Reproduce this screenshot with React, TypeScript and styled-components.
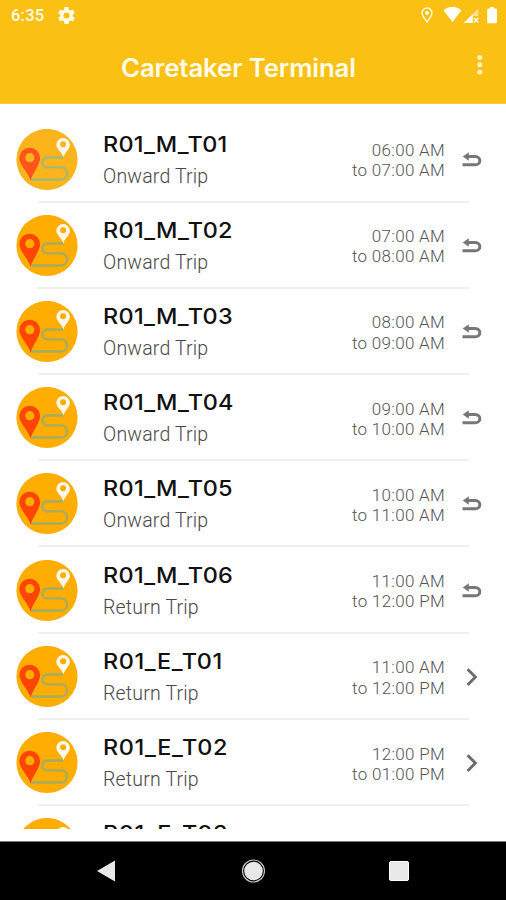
import React from "react";
import styled, { createGlobalStyle } from "styled-components";

const GlobalStyle = createGlobalStyle`
  * { box-sizing: border-box; }
  body { margin: 0; background: #fff; overflow: hidden; }
`;

const Screen = styled.div`
  width: 506px;
  height: 900px;
  display: flex;
  flex-direction: column;
  overflow: hidden;
  background: #fefefe;
  font-family: Roboto, "Liberation Sans", sans-serif;
`;

const Header = styled.header`
  flex: none;
  height: 104px;
  background: #fac013;
  color: #fffbe9;
  border-bottom: 1px solid #f8c640;
`;

const StatusBar = styled.div`
  height: 31px;
  padding: 0 8px 0 11px;
  display: flex;
  align-items: center;
  svg { display: block; }
`;

const Clock = styled.span`
  width: 47px;
  font: 500 16.5px/31px Roboto, sans-serif;
  letter-spacing: 0.2px;
`;

const StatusIcons = styled.div`
  margin-left: auto;
`;

const TitleBar = styled.div`
  height: 72px;
  display: grid;
  grid-template-columns: 121px 1fr 52px;
`;

const Title = styled.h1`
  grid-column: 2;
  margin: 0;
  padding-top: 1px;
  font: 600 25px/72px Inter, sans-serif;
  white-space: nowrap;
  letter-spacing: -0.15px;
  transform: scaleX(1.035);
  transform-origin: left;
`;

const MenuButton = styled.button`
  padding: 23px 0 0 21px;
  border: 0;
  background: none;
  display: flex;
  align-items: flex-start;
`;

const List = styled.ul`
  flex: none;
  height: 725px;
  margin: 0;
  padding: 12.4px 0 0;
  overflow: hidden;
  list-style: none;
`;

const Row = styled.li`
  height: 86.22px;
  padding-left: 16px;
  display: grid;
  grid-template-columns: 87px 1fr 160px 61px;
  align-items: center;
  background: linear-gradient(#efefef, #efefef) 22px 100% / 431px 2px no-repeat;
  background-origin: content-box;
  svg { display: block; }
`;

const Name = styled.div<{ $spacing: number }>`
  font: 500 21.5px/30px Inter, sans-serif;
  letter-spacing: ${(p) => p.$spacing}px;
  white-space: nowrap;
  color: #111;
  transform: scaleX(1.09);
  transform-origin: left;
`;

const Kind = styled.div`
  margin-top: 4px;
  min-height: 28px;
  font-size: 19.5px;
  line-height: 28px;
  font-weight: 300;
  letter-spacing: 0.18px;
  color: #484848;
`;

const Times = styled.div`
  text-align: right;
  font-size: 17px;
  line-height: 20.2px;
  font-weight: 300;
  letter-spacing: 0.3px;
  color: #555;
  padding-top: 1.5px;
`;

const Action = styled.div`
  padding-left: 17px;
`;

const NavBar = styled.nav`
  margin-top: auto;
  height: 59px;
  border-top: 1px solid #777;
  background: #000;
  display: grid;
  grid-template-columns: 24px 24px 24px;
  column-gap: 122px;
  padding-left: 95px;
  align-items: center;
  svg { display: block; }
`;

const RouteIcon = ({ pale }: { pale: boolean }) => {
  const disc = pale ? "#fcb41c" : "#ffad00";
  return (
    <svg width="62" height="62" viewBox="0 0.5 62 62">
      <circle cx="31" cy="31" r="30.6" fill={disc} />
      <path
        d="M47 29H31.5C24.5 29 24.5 38.8 31.5 38.8H45C53 38.8 53 51 45 51H14.7"
        fill="none"
        stroke={pale ? "#a5b870" : "#a3ad62"}
        strokeWidth="2.3"
      />
      <path d="M14.5 52C12.5 44.5 3.3 36.5 3.3 29.6a10.4 10.4 0 0 1 20.8 0C24.1 36.5 17 44 14.5 52Z" fill={pale ? "#ff551c" : "#ff4500"} />
      <circle cx="13.8" cy="29.2" r="4.6" fill={disc} />
      <path d="M47.4 28.8C46 23.6 40.3 20.5 40.3 16.3a6.8 6.8 0 0 1 13.6 0C53.9 20.5 49 23.6 47.4 28.8Z" fill="#fff8ea" />
      <circle cx="47.1" cy="15.8" r="3" fill={disc} />
    </svg>
  );
};

const ReturnIcon = () => (
  <svg width="20" height="18" viewBox="0 0 20 18">
    <path d="M4 5.6H13.1C19.4 5.6 19.4 13.7 13.1 13.7H0.5" fill="none" stroke="#777" strokeWidth="3" />
    <path d="M0.7 5.5 6.8 1.3v8.4Z" fill="#777" />
  </svg>
);

const ChevronIcon = () => (
  <svg width="20" height="20" viewBox="0 0 20 20">
    <path d="m5.6 2.2 7.8 7.900-7.800 7.900" fill="none" stroke="#6c6c6c" strokeWidth="2.9" />
  </svg>
);

const GearIcon = () => (
  <svg width="17" height="17" viewBox="2 2 20 20" fill="#fffbe9">
    <path d="M19.4 13a7.5 7.5 0 0 0 0-2l2.1-1.6c.2-.2.3-.4.1-.6l-2-3.5c-.1-.2-.4-.3-.6-.2l-2.5 1a7.3 7.3 0 0 0-1.7-1l-.4-2.7A.5.5 0 0 0 14 2h-4a.5.5 0 0 0-.5.4L9.2 5.1c-.6.2-1.2.6-1.7 1L5 5.1c-.2-.1-.5 0-.6.2l-2 3.5c-.1.2 0 .5.1.6L4.6 11a7.5 7.5 0 0 0 0 2l-2.1 1.6c-.2.2-.3.4-.1.6l2 3.5c.1.2.4.3.6.2l2.5-1c.5.4 1.1.7 1.7 1l.4 2.7c0 .2.2.4.4.4h4c.3 0 .5-.2.5-.4l.4-2.7c.6-.3 1.2-.6 1.7-1l2.5 1c.2.1.5 0 .6-.2l2-3.5c.1-.2.1-.4-.1-.6ZM12 15.6a3.6 3.6 0 1 1 0-7.2 3.6 3.6 0 0 1 0 7.2Z" />
  </svg>
);

const SystemIcons = () => (
  <svg width="78" height="18" viewBox="420 7 78 18">
    <path d="M427 22.2C425.5 19.3 422 16 422 13a5 5 0 0 1 10 0C432 16 428.5 19.3 427 22.2Z" fill="none" stroke="#fffbe9" strokeWidth="1.4" />
    <circle cx="427" cy="13" r="1.9" fill="#fffbe9" />
    <path d="M443.500 10.200Q452.500 3.400 461.500 10.200L452.500 22.300Z" fill="#fffdf5" />
    <path d="M463.800 23 478.300 8.500V16H473V23Z" fill="#fffdf5" fillOpacity=".55" />
    <path d="M463.800 23 472.500 14.300V23Z" fill="#fffdf5" />
    <path d="m474 18 4.300 4.500m0-4.500-4.300 4.500" stroke="#fffdf5" strokeWidth="1.3" />
    <path d="M488.500 8.500H490V7h4v1.500h1.700q1.300 0 1.300 1.300v12.200q0 1.300-1.300 1.300h-7.200q-1.300 0-1.300-1.300V9.800q0-1.300 1.300-1.300Z" fill="#fffdf5" />
  </svg>
);

type Trip = { name: string; kind?: string; from?: string; to?: string; spacing: number; returns?: boolean };

const trips: Trip[] = [
  { name: "R01_M_T01", kind: "Onward Trip", from: "06:00 AM", to: "07:00 AM", spacing: 0.24, returns: true },
  { name: "R01_M_T02", kind: "Onward Trip", from: "07:00 AM", to: "08:00 AM", spacing: 0.3, returns: true },
  { name: "R01_M_T03", kind: "Onward Trip", from: "08:00 AM", to: "09:00 AM", spacing: 0.28, returns: true },
  { name: "R01_M_T04", kind: "Onward Trip", from: "09:00 AM", to: "10:00 AM", spacing: 0.3, returns: true },
  { name: "R01_M_T05", kind: "Onward Trip", from: "10:00 AM", to: "11:00 AM", spacing: 0.3, returns: true },
  { name: "R01_M_T06", kind: "Return Trip", from: "11:00 AM", to: "12:00 PM", spacing: 0.3, returns: true },
  { name: "R01_E_T01", kind: "Return Trip", from: "11:00 AM", to: "12:00 PM", spacing: 0.5 },
  { name: "R01_E_T02", kind: "Return Trip", from: "12:00 PM", to: "01:00 PM", spacing: 0.55 },
  { name: "R01_E_T03", spacing: 0.55 },
];

export default function App() {
  return (
    <Screen>
      <GlobalStyle />
      <Header>
        <StatusBar>
          <Clock>6:35</Clock>
          <GearIcon />
          <StatusIcons><SystemIcons /></StatusIcons>
        </StatusBar>
        <TitleBar>
          <Title>Caretaker Terminal</Title>
          <MenuButton aria-label="More options">
            <svg width="10" height="22" viewBox="0 0 10 22" fill="#fff3c4">
              <circle cx="4.8" cy="3.5" r="2.5" />
              <circle cx="4.8" cy="10.7" r="2.5" />
              <circle cx="4.8" cy="18" r="2.5" />
            </svg>
          </MenuButton>
        </TitleBar>
      </Header>
      <List>
        {trips.map((trip, i) => (
          <Row key={trip.name}>
            <RouteIcon pale={i === 0} />
            <div>
              <Name $spacing={trip.spacing}>{trip.name}</Name>
              <Kind>{trip.kind}</Kind>
            </div>
            <Times>
              {trip.from && <div>{trip.from}</div>}
              {trip.to && <div>to {trip.to}</div>}
            </Times>
            <Action>{trip.returns ? <ReturnIcon /> : <ChevronIcon />}</Action>
          </Row>
        ))}
      </List>
      <NavBar>
        <svg width="24" height="24" viewBox="0 0 24 24"><path d="M2 12 20 1.5v21Z" fill="#e8e8e8" /></svg>
        <svg width="24" height="24" viewBox="0 0 24 24">
          <circle cx="12.5" cy="12" r="11" fill="none" stroke="#c4c4c4" strokeWidth="1.2" />
          <circle cx="12.5" cy="12" r="9.3" fill="#e8e8e8" />
        </svg>
        <svg width="24" height="24" viewBox="0 0 24 24"><rect x="2.5" y="2.5" width="19" height="19" rx="1.5" fill="#e8e8e8" stroke="#fff" /></svg>
      </NavBar>
    </Screen>
  );
}
